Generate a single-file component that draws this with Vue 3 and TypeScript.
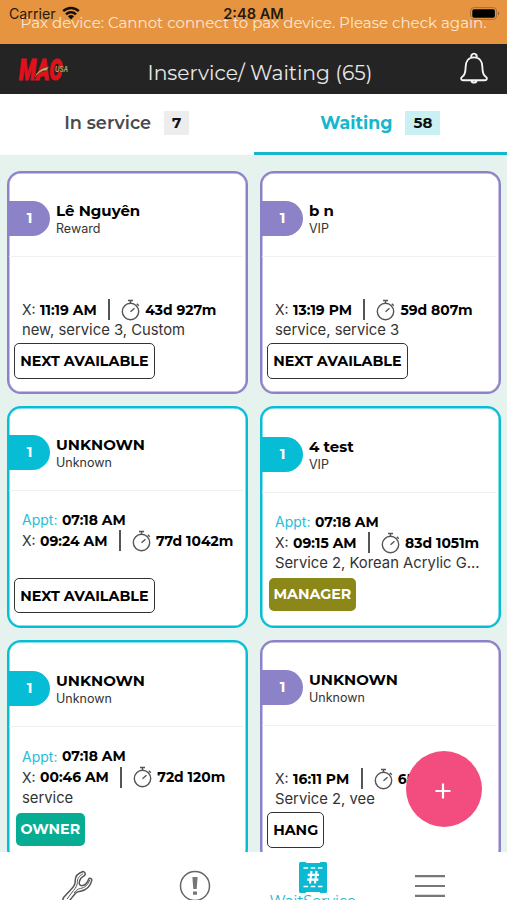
<script setup lang="ts">
interface Ticket {
  name: string
  tier: string
  tone: 'purple' | 'cyan'
  appt?: string
  time: string
  wait: string
  services: string
  tag: string
  tagStyle: 'outline' | 'olive' | 'green'
}

const tickets: Ticket[] = [
  { name: 'Lê Nguyên', tier: 'Reward', tone: 'purple', time: '11:19 AM', wait: '43d 927m', services: 'new, service 3, Custom', tag: 'NEXT AVAILABLE', tagStyle: 'outline' },
  { name: 'b n', tier: 'VIP', tone: 'purple', time: '13:19 PM', wait: '59d 807m', services: 'service, service 3', tag: 'NEXT AVAILABLE', tagStyle: 'outline' },
  { name: 'UNKNOWN', tier: 'Unknown', tone: 'cyan', appt: '07:18 AM', time: '09:24 AM', wait: '77d 1042m', services: '', tag: 'NEXT AVAILABLE', tagStyle: 'outline' },
  { name: '4 test', tier: 'VIP', tone: 'cyan', appt: '07:18 AM', time: '09:15 AM', wait: '83d 1051m', services: 'Service 2, Korean Acrylic G...', tag: 'MANAGER', tagStyle: 'olive' },
  { name: 'UNKNOWN', tier: 'Unknown', tone: 'cyan', appt: '07:18 AM', time: '00:46 AM', wait: '72d 120m', services: 'service', tag: 'OWNER', tagStyle: 'green' },
  { name: 'UNKNOWN', tier: 'Unknown', tone: 'purple', time: '16:11 PM', wait: '65d 635m', services: 'Service 2, vee', tag: 'HANG', tagStyle: 'outline' },
]
</script>

<template>
  <div class="screen">
    <div class="alert">
      <div class="status">
        <span class="carrier">Carrier</span>
        <svg class="wifi" width="18" height="14" viewBox="0 0 18 14">
          <path d="M1.200 5.200a11.200 11.200 0 0 1 15.600 0M4 8.300a7.200 7.200 0 0 1 10 0" fill="none" stroke="#111" stroke-width="2.500" />
          <path d="M9 13.400 5.900 10.300a4.400 4.400 0 0 1 6.200 0z" fill="#111" />
        </svg>
        <span class="clock">2:48 AM</span>
        <svg class="battery" width="31" height="13" viewBox="0 0 31 13">
          <rect x=".6" y=".6" width="26" height="11.800" rx="3.400" fill="none" stroke="#a96f38" stroke-width="1" />
          <rect x="2.300" y="2.300" width="22.600" height="8.400" rx="1.800" fill="#000" />
          <path d="M28.200 4.300q2.200 2.200 0 4.400z" fill="#8a5c33" />
        </svg>
      </div>
      <p class="message">Pax device: Cannot connect to pax device. Please check again.</p>
    </div>

    <header class="topbar">
      <svg class="logo" width="56" height="32" viewBox="0 0 56 32">
        <text x="3" y="26.500" class="logo-main" textLength="43" lengthAdjust="spacingAndGlyphs">MAC</text>
        <path d="M18 26Q21 15 33 13.600L31 17.500Q23 17.500 18 26Z" fill="#c9a45c" stroke="#242424" stroke-width=".5" />
        <text x="39" y="19" class="logo-sub" textLength="13" lengthAdjust="spacingAndGlyphs">USA</text>
      </svg>
      <h1 class="title">Inservice/ Waiting (65)</h1>
      <svg class="bell" width="30" height="34" viewBox="0 0 30 34" fill="none" stroke="#f4f4f4" stroke-width="1.900" stroke-linejoin="round">
        <path d="M12.400 5.500a2.800 2.800 0 1 1 5.200 0M15 5.400c-5.800 0-8.400 4.400-8.400 9.800 0 6-1 8-3.400 9.600-2 1.300-1 3.400.8 3.400h22c1.800 0 2.800-2.100.8-3.400-2.400-1.600-3.400-3.600-3.400-9.600 0-5.400-2.600-9.800-8.400-9.800zM12.200 28.500a2.900 2.900 0 0 0 5.600 0" />
      </svg>
    </header>

    <nav class="tabs">
      <div class="tab"><span class="tab-name">In service</span><span class="count">7</span></div>
      <div class="tab active"><span class="tab-name">Waiting</span><span class="count">58</span></div>
    </nav>

    <main class="board">
      <article v-for="(t, i) in tickets" :key="i" class="card" :class="[t.tone, t.tagStyle, { booked: t.appt }]">
        <div class="head">
          <span class="order">1</span>
          <div class="who">
            <span class="name">{{ t.name }}</span>
            <span class="tier">{{ t.tier }}</span>
          </div>
        </div>
        <div class="body">
          <div v-if="t.appt" class="row appt"><span class="label">Appt:</span><b>{{ t.appt }}</b></div>
          <div class="row">
            <span class="label">X:</span><b class="time">{{ t.time }}</b>
            <i class="bar"></i>
            <svg class="watch" width="20" height="22" viewBox="0 0 20 22" fill="none" stroke="#555" stroke-width="1.400">
              <circle cx="9.500" cy="12.500" r="8.200" />
              <path d="M7 1.500h5M9.500 1.500v3M15.800 4.800l2 2M9.500 12.800l4-3.600" />
            </svg>
            <b>{{ t.wait }}</b>
          </div>
          <div class="services">{{ t.services }}</div>
          <span class="tag">{{ t.tag }}</span>
        </div>
      </article>
    </main>

    <button class="add" type="button" aria-label="Add">
      <svg width="16" height="16" viewBox="0 0 16 16"><path d="M8 .5v15M.5 8h15" stroke="#fff" stroke-width="2.200" /></svg>
    </button>

    <footer class="bottom">
      <div class="item">
        <svg width="34" height="34" viewBox="0 0 34 34" fill="none" stroke="#555" stroke-width="1.500" stroke-linejoin="round">
          <path d="M22 1.500c-5 1.700-8.200 5.200-7.800 10 .1 2.200-.7 4-2.200 5.700L3 27c-2.500 3-.5 6.500 3 6.500 3-3 5.500-7 9-10.800 1-1 2.500-1.200 4.500-1.500 6-1 10-5.600 11.300-10.800.2-2.200-2.400-2.700-3.300-1-1.200 3.500-3.300 5.600-6 6.200-2.500.3-3.600-1.200-3.200-3.400.4-3 2.300-5 5.100-6.500 1.600-1.500.6-4-1.400-4.200z" />
          <path d="M22 3.800c-4 2-5.800 5-5.700 8.700.1 3-1.800 5.500-3.800 8L6 29M28.800 10c-2 5-5 7.700-9.500 8.500-2.800.5-4.300 2-6.300 4.500" stroke-width="1" />
        </svg>
      </div>
      <div class="item">
        <svg width="32" height="32" viewBox="0 0 32 32">
          <circle cx="16" cy="16" r="14.500" fill="none" stroke="#666" stroke-width="1.500" />
          <path d="M13.400 7h5.200l-.9 12h-3.400zM14 21.500h4v3.300h-4z" fill="#777" />
        </svg>
      </div>
      <div class="item current">
        <svg width="30" height="31" viewBox="0 0 30 31">
          <path d="M2.500 0h5l1 1h13l1-1h5Q29 0 29 1.500v28q0 1.500-1.500 1.500h-5l-1-1h-13l-1 1h-5Q1 31 1 29.500v-28Q1 0 2.500 0z" fill="#0cb9d2" />
          <path d="M5.500 6h19M5.500 24.500h19" stroke="#fff" stroke-width="1.700" stroke-dasharray="4.600 2.600" />
          <path d="M13.500 9 12 21.500M18.500 9 17 21.500M9.800 12.900h11.200M9.200 17.600h11.200" stroke="#fff" stroke-width="2.100" />
        </svg>
        <span class="caption">WaitService</span>
      </div>
      <div class="item">
        <svg width="32" height="26" viewBox="0 0 32 26"><path d="M1 3.200h30M1 13h30M1 22.800h30" stroke="#777" stroke-width="2.200" /></svg>
      </div>
    </footer>
  </div>
</template>

<style>
body { margin: 0; overflow: hidden; }
</style>

<style scoped>
* { box-sizing: border-box; }
.screen { position: relative; width: 507px; height: 900px; overflow: hidden; display: flex; flex-direction: column; background: #e6f2ee; font-family: Montserrat, Inter, sans-serif; color: #111; }
.alert { position: relative; flex: none; height: 44px; background: #e79440; overflow: hidden; }
.message { margin: 0; padding-top: 13px; text-align: center; font-size: 15.050px; line-height: 20px; color: #fbe8d2; white-space: nowrap; }
.status { position: absolute; inset: 0; z-index: 1; font: 500 14.200px/20px Inter, sans-serif; color: #241a10; }
.carrier { position: absolute; left: 9px; top: 4px; font-weight: 400; }
.wifi { position: absolute; left: 62px; top: 6px; }
.clock { position: absolute; left: 0; width: 507px; top: 4px; text-align: center; font-weight: 600; font-size: 14.600px; }
.battery { position: absolute; left: 470px; top: 7px; }

.topbar { flex: none; height: 50px; background: #242424; display: flex; align-items: center; padding: 0 18px 0 16px; }
.logo { display: block; overflow: visible; margin-top: -1px; }
.logo-main { font: italic 900 30px "Roboto", sans-serif; fill: #e2101c; stroke: #e2101c; stroke-width: .9px; }
.logo-sub { font: italic 700 8.500px "Liberation Sans", sans-serif; fill: #c9a45c; }
.title { flex: 1; margin: 7px 11px 0 0; text-align: center; font-size: 20.300px; line-height: 26px; font-weight: 400; color: #e8e8e8; white-space: nowrap; }

.tabs { flex: none; height: 61px; display: flex; background: #fff; }
.tab { flex: 1; display: flex; align-items: center; justify-content: center; gap: 13px; border-bottom: 3px solid transparent; color: #4a4a4a; }
.tab-name { margin-top: -1px; font-size: 17.700px; font-weight: 600; }
.count { height: 24px; padding: 0 8px; background: #ededed; color: #111; font-size: 15px; line-height: 24px; font-weight: 700; }
.active { color: #14b7cc; border-bottom-color: #14b7cc; }
.active .tab-name { font-size: 17.400px; font-weight: 700; }
.active .count { background: #c9f1f4; }

.board { flex: 1; min-height: 0; overflow: hidden; display: grid; grid-template-columns: 241px 241px; grid-auto-rows: 222.500px; gap: 12px; padding: 16px 6px 0 7px; align-content: start; }
.card { display: flex; flex-direction: column; background: #fff; border: 2px solid var(--tone); box-shadow: inset 0 0 0 .5px var(--tone); border-radius: 14px; }
.purple { --tone: #8c82c8; }
.cyan { --tone: #06bdd5; }
.head { flex: none; height: 84px; padding-top: 28px; display: flex; margin: 0 3px 0 0; border-bottom: 1px solid #f0f0f0; }
.order { flex: none; width: 41px; height: 35px; border-radius: 0 18px 18px 0; background: var(--tone); color: #fff; font-size: 14.500px; font-weight: 700; line-height: 35px; text-align: center; }
.who { display: flex; flex-direction: column; padding-left: 6px; }
.name { font-size: 15px; font-weight: 700; line-height: 20px; color: #000; }
.tier { font: 400 12.500px/15px Inter, sans-serif; color: #333; }
.body { flex: 1; display: flex; flex-direction: column; align-items: flex-start; padding: 42px 0 13px 13px; }
.booked .body { padding-top: 18.500px; }
.booked.outline .head { height: 83.500px; padding-top: 27.500px; }
.booked.outline .body { padding-top: 18px; }
.booked.olive .head, .booked.green .head { height: 85px; padding-top: 29px; }
.row { flex: none; height: 21px; display: flex; align-items: center; font-size: 13.900px; white-space: nowrap; }
.row b { font-weight: 700; color: #000; }
.label { font: 400 14px Inter, sans-serif; color: #333; margin-right: 4.500px; }
.appt .label { color: #28bdd6; }
.bar { width: 2px; height: 21px; margin: 0 11px 0 11.500px; background: #555; }
.watch { margin-right: 4px; }
.services { flex: none; height: 20px; font: 400 14.800px/20px Inter, sans-serif; color: #333; white-space: nowrap; }
.tag { margin: auto 0 0 -8px; height: 35.500px; padding: 0 5.200px; border: 1.500px solid #333; border-radius: 5px; font-size: 14.250px; line-height: 34px; font-weight: 700; color: #000; white-space: nowrap; }
.olive .tag, .green .tag { margin: auto 0 2px -6.500px; height: 33px; padding: 0 5px; border: 0; color: #fff; line-height: 33px; }
.olive .tag { background: #8b8718; }
.green .tag { background: #07ad92; }

.add { position: absolute; left: 406px; top: 751px; width: 76px; height: 76px; padding: 4px 2px 0 0; border: 0; border-radius: 50%; background: #f34d80; display: grid; place-items: center; }
.bottom { flex: none; height: 48px; display: flex; padding: 0 18px 0 19px; background: #fff; overflow: hidden; }
.item { flex: 1; display: flex; flex-direction: column; align-items: center; padding-top: 18px; }
.item svg { flex: none; }
.current { padding-top: 10px; }
.item:last-child { padding-top: 21px; }
.caption { font-size: 14.600px; line-height: 17px; color: #14b7cc; }
</style>
